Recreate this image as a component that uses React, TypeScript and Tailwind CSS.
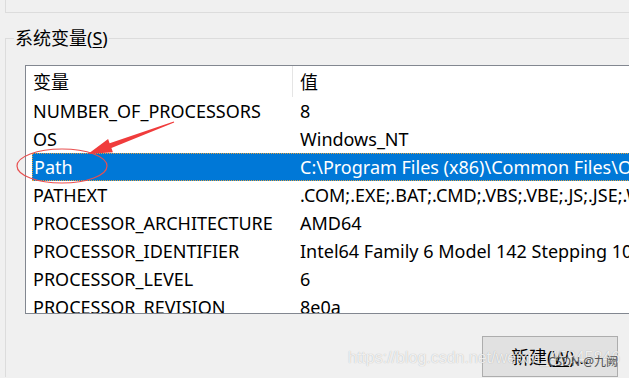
const rows: { name: string; value: string; selected?: boolean }[] = [
  { name: "NUMBER_OF_PROCESSORS", value: "8" },
  { name: "OS", value: "Windows_NT" },
  { name: "Path", value: "C:\\Program Files (x86)\\Common Files\\Oracle\\Java\\javapath;", selected: true },
  { name: "PATHEXT", value: ".COM;.EXE;.BAT;.CMD;.VBS;.VBE;.JS;.JSE;.WSF;.WSH;.MSC" },
  { name: "PROCESSOR_ARCHITECTURE", value: "AMD64" },
  { name: "PROCESSOR_IDENTIFIER", value: "Intel64 Family 6 Model 142 Stepping 10, GenuineIntel" },
  { name: "PROCESSOR_LEVEL", value: "6" },
  { name: "PROCESSOR_REVISION", value: "8e0a" },
];

const font = "font-['Noto_Sans','Noto_Sans_CJK_SC',sans-serif]";

export default function App() {
  return (
    <div className={`relative w-[629px] h-[378px] overflow-hidden bg-[#f0f0f0] text-[18px] text-black ${font}`}>
      {/* bottom of the user variables group */}
      <div className="h-[13px] ml-[5px] border-l border-b border-[#dcdcdc]" />

      {/* system variables group */}
      <div className="relative mt-[25px] ml-[5px] border-l border-t border-[#dcdcdc]">
        <div className="absolute -top-[14px] left-[8px] bg-[#f0f0f0] px-[1px] leading-[26px]">
          系统变量(<span className="underline underline-offset-2">S</span>)
        </div>

        <div className="ml-[19px] mt-[26px] w-[640px] h-[249px] border border-[#828790] bg-white overflow-hidden">
          <div className="flex h-[31px] items-center leading-none">
            <div className="w-[266px] shrink-0 pl-[7px]">变量</div>
            <div className="w-px shrink-0 h-full bg-[#e5e5e5]" />
            <div className="pl-[7px]">值</div>
          </div>
          {rows.map((r) => (
            <div
              key={r.name}
              className={
                r.selected
                  ? "flex h-[28px] items-center ml-[6px] pl-[1px] bg-[#0078d7] text-white border border-dotted border-[#e0a040] whitespace-nowrap overflow-hidden"
                  : "flex h-[28px] items-center whitespace-nowrap overflow-hidden"
              }
            >
              <div className={r.selected ? "w-[259px] shrink-0" : "w-[267px] shrink-0 pl-[7px]"}>{r.name}</div>
              <div className="pl-[7px] shrink-0">{r.value}</div>
            </div>
          ))}
        </div>

        <div className="flex justify-end pr-[11px] mt-[22px]">
          <button className="w-[136px] h-[41px] border border-[#adadad] bg-[#e1e1e1] text-[18px] leading-none">
            新建(<span className="underline underline-offset-2">W</span>)...
          </button>
        </div>
      </div>

      {/* red annotation */}
      <svg className="absolute left-0 top-0 pointer-events-none" width="629" height="378">
        <ellipse cx="62" cy="166" rx="45" ry="17" fill="none" stroke="#e85050" strokeWidth="1.2" />
        <polygon
          points="174.2,122.6 111.4,147.9 112.9,152.2 88,154 108.1,139 109.6,143.3 173.8,121.4"
          fill="#f03c3c"
        />
      </svg>

      {/* watermark */}
      <div className="absolute left-[348px] top-[346px] text-[16px] text-white/80 font-['Liberation_Sans',sans-serif] [text-shadow:0_0_1px_rgba(0,0,0,0.3)] whitespace-nowrap pointer-events-none">
        https://blog.csdn.net/weixin_45845846
      </div>
      <div className="absolute left-[548px] top-[356px] text-[12px] leading-none text-[#555] whitespace-nowrap pointer-events-none">
        CSDN @九阙
      </div>
    </div>
  );
}
